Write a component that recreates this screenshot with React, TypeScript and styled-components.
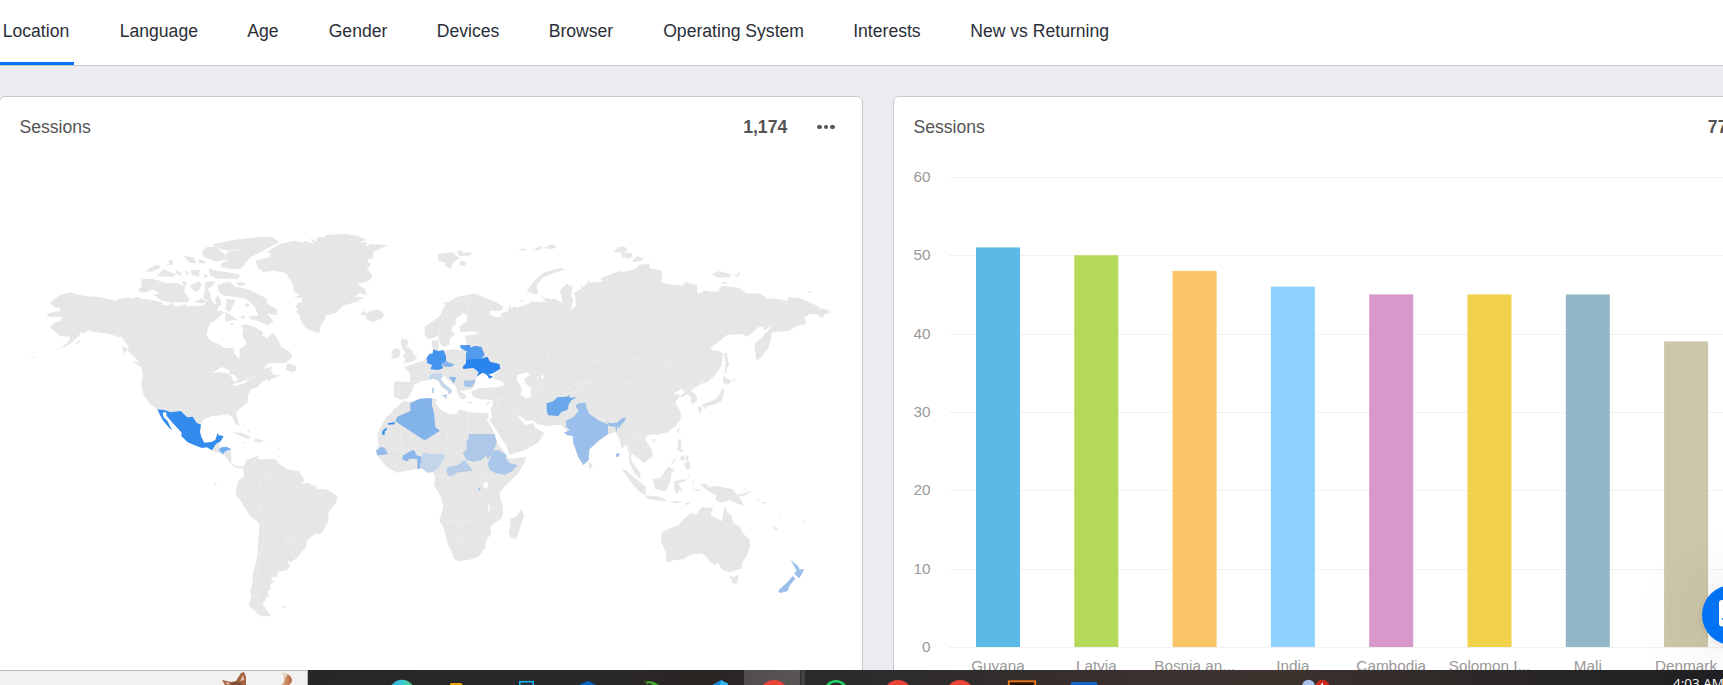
import React from 'react';
import styled, { createGlobalStyle } from 'styled-components';

const GlobalStyle = createGlobalStyle`
  * { box-sizing: border-box; }
  body { margin: 0; overflow: hidden; background: #ebecf0; font-family: "Liberation Sans", Arial, sans-serif; }
`;

const Page = styled.div`
  display: flex;
  flex-direction: column;
  width: 1723px;
  height: 685px;
  overflow: hidden;
  position: relative;
  background: #ebecf0;
`;

const TabBar = styled.nav`
  display: flex;
  flex: none;
  height: 66px;
  padding-left: 2.7px;
  background: #fff;
  border-bottom: 1px solid #c3c8cd;
`;

const Tab = styled.a<{ $width: number }>`
  flex: none;
  width: ${p => p.$width}px;
  line-height: 62px;
  font-size: 17.6px;
  white-space: nowrap;
  color: #2b2e38;
`;

const ActiveMark = styled.span`
  display: block;
  width: 76px;
  height: 3px;
  margin-left: -4.7px;
  background: #0073f5;
`;

const Board = styled.main`
  display: flex;
  flex: 1;
  min-height: 0;
  gap: 30px;
  margin: 30px 0 0 -1px;
`;

const Card = styled.section<{ $width: number }>`
  flex: none;
  display: flex;
  flex-direction: column;
  width: ${p => p.$width}px;
  height: 640px;
  background: #fff;
  border: 1px solid #c5cad0;
  border-radius: 6px;
`;

const CardHeader = styled.header`
  display: flex;
  align-items: center;
  flex: none;
  height: 43px;
  padding: 17px 27px 0 19.5px;
  font-size: 17.6px;
  color: #545454;
`;

const CardTitle = styled.span`
  flex: 1;
`;

const Total = styled.strong`
  margin-right: 30px;
`;

const MoreButton = styled.button`
  display: flex;
  gap: 2px;
  padding: 0;
  border: 0;
  background: none;
`;

const Dot = styled.i`
  width: 4.6px;
  height: 4.6px;
  border-radius: 50%;
  background: #545454;
`;

const Drawing = styled.svg`
  display: block;
  flex: none;
`;

const AxisLabel = styled.text`
  font-size: 15.3px;
  fill: #999;
`;

const ChatLauncher = styled.button`
  position: absolute;
  left: 1702px;
  top: 585px;
  display: flex;
  align-items: flex-start;
  width: 60px;
  height: 60px;
  padding: 15px 0 0 17px;
  border: 0;
  border-radius: 50%;
  background: #0073f5;
  box-shadow: 0 2px 10px rgba(0, 0, 0, 0.08), 0 0 80px rgba(0, 0, 0, 0.14);
`;

const Taskbar = styled.footer`
  position: relative;
  display: flex;
  flex: none;
  height: 15px;
  overflow: hidden;
  background: linear-gradient(90deg, #292423 0, #282626 308px, #29292c 560px, #2b2523 700px, #2a2a2d 830px, #3a302d 1130px, #3c322e 1290px, #2b2727 1500px, #1f2023 1723px);
`;

const SearchBox = styled.div`
  flex: none;
  width: 308px;
  background: #f1f1f1;
  border-top: 1px solid #b9b9b9;
  border-right: 1px solid #b9b9b9;
`;

const Slots = styled.div`
  display: flex;
  flex: 1;
  margin-left: 63px;
`;

const Slot = styled.div<{ $active?: boolean }>`
  flex: none;
  width: 62px;
  height: 15px;
  background: ${p => (p.$active ? 'linear-gradient(90deg, transparent 1px, #514d4c 1px, #595655 57px, #2b2b2c 57px, #424142 59px)' : 'none')};
`;

const Tray = styled.div`
  display: flex;
  flex: none;
  width: 423px;
`;

const Clock = styled.span`
  margin: 4px 0 0 -50px;
  font: 13.5px/18px "Open Sans", sans-serif;
  white-space: nowrap;
  color: #fff;
`;

const tabs: [string, number][] = [
  ['Location', 117], ['Language', 127.5], ['Age', 81.5], ['Gender', 108], ['Devices', 112],
  ['Browser', 114.5], ['Operating System', 190], ['Interests', 117], ['New vs Returning', 150],
];

type Country = [fill: string, d: string];

/* Outlines are grouped by continent; each group has its own drawing origin at a third of scale. */
const americaLand = `
M148,250 L180,225 L212,217 L238,225 L265,229 L300,231 L345,242 L360,236 L388,232 L395,236 L413,230 L424,236 L462,241 L490,248 L487,254 L502,257 L515,250 L530,260 L553,253 L562,259 L607,257 L615,252 L622,243 L610,232 L612,214 L622,207 L632,222 L632,235 L640,250 L648,254 L646,234 L656,226 L662,240 L664,255 L655,262 L650,275 L662,272 L672,277 L655,295 L632,310 L624,325 L620,348 L632,362 L656,372 L672,384 L700,384 L702,400 L718,418 L719,388 L736,375 L738,365 L726,345 L730,330 L724,318 L738,313 L765,322 L790,336 L786,345 L800,355 L820,339 L838,365 L842,380 L872,397 L876,412 L858,428 L806,430 L790,446 L802,443 L818,440 L812,452 L822,464 L845,465 L812,478 L806,486 L803,478 L790,484 L778,494 L776,500 L752,508 L743,530 L744,546 L712,572 L708,582 L715,604 L716,618 L706,612 L697,590 L682,583 L665,584 L650,588 L636,587 L610,600 L603,614 L590,608 L578,590 L562,592 L542,573 L512,577 L496,571 L472,568 L450,552 L432,525 L425,508 L424,490 L428,465 L425,444 L408,432 L398,423 L418,428 L384,392 L385,378 L366,350 L355,352 L330,342 L304,338 L278,335 L270,330 L248,342 L245,333 L236,348 L215,368 L195,380 L160,392 L185,382 L205,366 L210,350 L180,348 L150,322 L162,308 L184,302 L184,290 L150,291 L138,283 L165,275 L181,274 L180,265 L165,262Z
M640,72 L700,60 L780,50 L816,52 L838,66 L790,92 L752,112 L722,146 L700,148 L664,142 L662,132 L684,120 L676,103 L686,95 L735,88 L690,92 L662,88 L645,80Z
M622,80 L645,80 L672,100 L682,118 L650,125 L610,110 L606,96Z
M550,108 L580,112 L590,130 L570,128Z M596,116 L616,124 L616,130 L598,130Z
M436,154 L460,138 L478,134 L480,144 L455,156Z M502,122 L520,119 L518,135 L498,135 L510,129Z
M470,168 L490,148 L502,152 L518,160 L528,160 L520,170 L498,170Z M526,148 L545,160 L543,168 L530,162Z M555,150 L567,158 L560,164Z
M572,150 L600,150 L596,170 L575,165Z M626,145 L650,152 L700,160 L720,164 L715,176 L650,176 L630,165Z M608,160 L625,168 L616,175Z
M425,178 L450,176 L484,182 L462,200 L450,212 L430,218 L414,212 L424,200Z
M455,206 L485,184 L500,190 L535,190 L555,200 L553,216 L570,240 L560,248 L530,246 L510,248 L482,240 L460,224 L480,220Z M546,186 L556,184 L562,196 L552,198Z
M570,196 L598,184 L606,196 L590,217 L575,206Z M615,186 L648,184 L640,195 L622,210 L614,206Z M582,246 L605,234 L622,246 L606,250Z
M652,196 L672,188 L690,186 L706,200 L740,206 L780,226 L802,236 L800,250 L832,270 L830,284 L815,284 L800,278 L820,304 L808,312 L805,318 L775,302 L752,298 L745,290 L775,286 L765,262 L750,246 L735,235 L700,230 L668,226 L655,212Z
M706,186 L732,188 L738,196 L716,198Z M680,236 L706,240 L700,255 L690,275 L676,270Z M676,276 L700,290 L712,300 L690,302 L676,306Z M718,292 L735,286 L732,298Z M738,250 L748,252 L745,262 L736,260Z M688,312 L702,308 L698,318Z
M366,376 L384,386 L372,402Z M226,368 L242,358 L238,368 L228,372Z M88,411 L108,412 L98,414Z M398,421 L418,430 L432,444 L424,443Z
M862,430 L888,438 L888,452 L876,456 L856,450Z
M636,692 L648,672 L660,668 L658,680 L664,684 L655,692 L668,702 L692,688 L694,712 L693,728 L710,738 L733,740 L730,746 L706,742 L690,730 L676,708 L660,700Z
M697,637 L725,638 L752,652 L745,657 L728,650Z M762,655 L793,662 L785,667 L764,667Z M727,667 L740,668 L733,671Z M808,669 L819,671 L812,672Z M742,626 L750,634 L746,638Z M727,612 L735,614 L730,617Z M834,680 L840,686 L838,690Z M836,706 L840,710 L836,714Z`;

const lakes = 'M638,458 L665,441 L688,450 L690,461 L660,457Z M690,462 L702,465 L716,478 L704,486 L697,478Z M697,493 L722,485 L752,476 L735,489 L703,499Z';

const americaBorders = 'M428,439 L618,439 L640,446 M735,475 L770,471 L785,455 L797,453 M345,342 L355,342 L385,378';

const americaCountries: Country[] = [
  ['#338bee', 'M472,568 L496,571 L512,577 L542,573 L562,592 L578,590 L590,608 L603,614 L600,635 L604,650 L613,668 L634,666 L646,660 L653,638 L656,646 L671,648 L662,664 L648,672 L642,682 L636,691 L620,682 L606,684 L580,674 L562,666 L544,648 L545,638 L512,602 L500,588 L498,576 L488,578 L490,590 L503,604 L516,631 L508,624 L490,603 L480,585Z'],
  ['#73adec', 'M656,690 L664,682 L680,680 L694,688 L680,692 L668,702Z'],
];

const greenland = `
M46,122 L90,110 L92,98 L80,96 L118,73 L162,62 L192,68 L196,62 L222,72 L210,55 L230,66 L230,50 L254,52 L256,45 L310,41 L352,47 L380,60 L356,67 L382,68 L378,82 L390,72 L444,75 L400,96 L398,116 L382,118 L384,128 L394,130 L380,152 L390,154 L397,172 L384,184 L350,192 L376,208 L380,226 L360,220 L342,230 L372,232 L350,246 L310,256 L288,278 L255,287 L254,300 L242,315 L238,339 L222,336 L198,324 L180,298 L178,284 L168,276 L178,264 L166,264 L174,248 L186,246 L186,234 L160,230 L180,226 L160,215 L160,195 L138,160 L105,152 L70,156 L54,144Z
M360,282 L372,272 L384,284 L382,276 L402,270 L420,271 L433,284 L424,296 L400,305 L382,300 L378,288Z`;

const eurasiaLand = `
M163,292 L190,272 L210,258 L222,228 L240,212 L262,200 L298,194 L312,190 L336,200 L370,212 L398,228 L400,236 L390,243 L358,242 L362,256 L376,262 L394,260 L392,250 L412,246 L420,222 L424,236 L436,226 L436,234 L480,220 L482,216 L530,215 L515,200 L540,208 L555,206 L578,220 L570,180 L590,162 L608,170 L604,196 L610,210 L602,240 L618,228 L616,200 L612,188 L634,176 L632,158 L638,172 L652,160 L655,148 L660,158 L700,154 L690,145 L750,122 L754,127 L795,118 L808,104 L832,102 L836,98 L840,115 L876,122 L874,158 L910,164 L938,167 L950,155 L960,162 L980,164 L983,190 L995,188 L1002,180 L1010,184 L1048,185 L1048,174 L1060,168 L1105,173 L1130,190 L1173,191 L1190,207 L1210,205 L1253,212 L1253,201 L1286,204 L1315,215 L1342,228 L1354,237 L1370,237 L1383,248 L1365,252 L1357,264 L1340,252 L1320,252 L1302,262 L1310,281 L1285,287 L1255,303 L1210,307 L1202,312 L1203,328 L1195,355 L1175,380 L1160,392 L1153,350 L1158,338 L1180,318 L1210,282 L1182,302 L1180,290 L1164,292 L1140,315 L1125,320 L1118,312 L1070,316 L1045,335 L1020,356 L1035,362 L1050,364 L1060,372 L1054,408 L1035,436 L1010,458 L998,460 L980,468 L962,484 L975,490 L981,500 L980,515 L965,524 L962,500 L950,492 L942,500 L930,502 L936,492 L945,488 L936,476 L915,488 L913,495 L928,492 L928,502 L915,516 L932,545 L932,568 L915,590 L892,607 L860,615 L840,613 L825,625 L832,638 L846,660 L847,680 L820,700 L808,687 L785,670 L783,690 L795,708 L810,728 L812,748 L795,732 L778,698 L778,672 L770,645 L755,655 L750,632 L738,606 L715,612 L658,658 L640,690 L608,618 L588,600 L575,585 L560,585 L535,588 L505,583 L490,572 L470,572 L446,555 L448,565 L465,585 L490,580 L497,594 L523,610 L505,638 L465,660 L418,675 L410,650 L385,610 L358,570 L366,560 L362,540 L368,522 L370,510 L330,508 L310,500 L304,488 L306,482 L330,474 L380,472 L404,466 L398,455 L372,446 L372,436 L391,418 L370,426 L340,430 L320,440 L316,455 L314,468 L304,478 L290,480 L270,484 L288,498 L286,506 L275,508 L262,490 L258,470 L240,455 L218,434 L176,436 L178,450 L155,454 L132,464 L126,486 L112,505 L92,510 L72,500 L72,458 L80,454 L120,456 L120,430 L102,412 L130,402 L160,392 L172,378 L188,372 L190,355 L184,346 L186,332 L202,330 L208,345 L203,358 L225,362 L250,358 L275,362 L270,346 L290,345 L285,322 L290,316 L315,314 L328,307 L300,304 L272,307 L268,290 L290,275 L292,255 L280,250 L258,265 L256,285 L245,290 L246,305 L256,312 L240,325 L238,345 L218,350 L208,335 L204,318 L178,328 L165,318Z
M204,72 L250,67 L262,80 L270,84 L252,96 L242,118 L222,103 L230,98 L204,92Z M262,64 L272,60 L280,68 L308,67 L298,77 L268,78Z M268,96 L280,92 L291,100 L282,108 L270,106Z
M444,60 L460,55 L468,58 L460,62Z M486,57 L494,56 L494,63Z M498,54 L516,46 L512,58 L500,62Z M520,54 L540,44 L552,44 L560,54 L540,57Z
M470,184 L490,156 L520,128 L572,113 L584,119 L550,130 L520,142 L500,165 L505,194 L485,190Z M448,212 L460,208 L456,216Z M218,222 L234,212 L228,222Z
M95,325 L112,330 L116,342 L108,348 L125,360 L132,375 L142,382 L132,394 L98,400 L108,388 L98,380 L106,368 L96,352 L92,340Z M70,358 L86,354 L92,368 L85,384 L62,386 L68,376 L64,368Z
M286,515 L310,517 L300,521Z M345,520 L364,514 L352,524Z M656,694 L668,706 L662,718 L656,714Z`;

const seas = 'M442,436 L470,426 L480,436 L462,446 L466,460 L482,475 L484,500 L468,504 L452,494 L456,475 L440,450Z M500,440 L506,438 L504,446Z M512,440 L524,432 L524,442 L514,446Z';

const eurasiaBorders = `M205,330 L210,290 L225,250 L260,215 L300,200 L318,202 M300,200 L298,225 L290,248 M318,202 L325,240 L338,280 L328,305
M436,412 L448,395 L480,388 L500,390 L535,395 L532,370 L560,362 L590,350 L605,366 L635,360 L660,390 L690,395 L705,410 L688,425 L690,440 L650,455 L640,468 L615,485 L620,495
M705,410 L740,396 L750,400 L780,382 L825,392 L860,408 L895,398 L905,402 L890,415 L915,430 L870,455 L830,466 L790,462 L760,455 L755,440 L725,430Z
M895,398 L925,370 L955,374 L975,402 L1015,418 L1000,445 L985,470 L950,480 M484,475 L530,490 L560,510 M370,510 L420,505 L430,480 L404,466 M430,480 L460,485 M420,505 L440,555 M366,560 L405,540 L420,555 L446,560
M484,475 L500,465 L520,470 L560,480 L590,490 L640,478 M590,475 L620,460 L660,458 M530,558 L545,588 M620,500 L620,522 M660,550 L700,570 L735,575 L765,562 L775,590 L790,605 L815,612 L840,615
M790,605 L770,630 L785,670 M790,620 L815,630 L835,640 L830,665 M160,392 L172,418 L176,436 M120,456 L155,454 M86,458 L86,500 M228,378 L285,372 M218,432 L245,420 L280,420 M245,412 L288,410 M258,442 L280,452 M262,470 L280,470 M288,328 L315,328 M290,340 L330,345
M360,520 L385,500 L378,545 M465,640 L500,620`;

const eurasiaCountries: Country[] = [
  ['#4394ee', 'M190,358 L205,364 L220,360 L228,378 L228,396 L214,402 L220,414 L205,420 L182,418 L186,404 L172,400 L170,384 L178,372 L188,370Z'],
  ['#84b4ea', 'M214,402 L228,393 L254,404 L242,411 L224,410Z'],
  ['#4b98ee', 'M270,346 L300,345 L304,356 L298,368 L286,362 L272,354Z'],
  ['#539ced', 'M304,352 L316,347 L334,350 L344,374 L334,388 L288,388 L288,368 L300,362Z'],
  ['#2a84ee', 'M288,388 L334,386 L352,380 L360,395 L388,402 L391,416 L372,428 L355,434 L370,440 L358,446 L350,434 L338,428 L325,436 L320,440 L326,426 L310,414 L280,417 L278,410 L288,400Z'],
  ['#c5d6e8', 'M176,438 L190,430 L218,430 L218,442 L212,446 L220,458 L246,480 L244,490 L236,494 L234,484 L215,470 L205,452 L190,446 L178,450Z M214,496 L232,492 L230,508Z'],
  ['#bcd0e6', 'M186,474 L192,472 L192,490 L186,488Z'],
  ['#86b5ea', 'M236,440 L258,442 L252,460Z'],
  ['#a4c4ea', 'M281,452 L317,450 L312,462 L304,471 L284,470Z'],
  ['#69a6ea', 'M530,520 L550,514 L562,502 L590,500 L597,496 L600,504 L622,501 L605,510 L597,522 L592,540 L575,545 L565,558 L534,556 L530,540Z'],
  ['#99bfea', 'M620,522 L636,518 L648,520 L650,534 L658,552 L690,574 L713,582 L715,612 L688,630 L658,658 L656,690 L640,705 L625,682 L610,640 L608,618 L592,616 L582,608 L600,600 L588,590 L588,572 L610,562 L626,542 L618,532Z M711,570 L718,580 L740,578 L755,565 L768,562 L765,572 L752,586 L748,594 L742,590 L740,610 L736,590 L716,588Z M738,672 L750,668 L746,680 L738,680Z'],
];

const africaLand = `
M82,50 L100,32 L120,36 L150,26 L185,24 L200,26 L198,40 L210,58 L240,74 L260,70 L268,58 L296,66 L355,70 L356,80 L350,88 L362,108 L375,135 L385,165 L400,180 L412,205 L430,206 L468,200 L465,215 L445,250 L405,288 L388,310 L390,325 L398,345 L399,370 L395,385 L362,408 L364,430 L350,450 L345,475 L325,500 L305,508 L265,514 L250,505 L248,492 L232,460 L222,415 L208,390 L220,350 L212,318 L192,286 L196,262 L190,246 L172,248 L158,236 L142,236 L110,242 L82,248 L50,230 L20,195 L20,175 L26,165 L22,135 L35,105 L50,80 L65,68 L70,58Z
M455,356 L462,378 L445,430 L438,446 L424,446 L415,428 L422,405 L420,388 L440,378Z M16,90 L36,87 L22,91Z`;

const africaLakes = 'M340,280 L355,276 L354,292 L340,294Z M353,342 L358,345 L360,365 L356,365Z';

const africaBorders = `M296,66 L296,132 M186,46 L198,40 M210,122 L232,122 L290,150 M232,122 L234,170 L222,192 M76,94 L90,105 L95,175 L60,180 M22,135 L44,134 M158,148 L150,170 L124,182
M222,392 L300,394 L345,380 M264,394 L262,470 M210,318 L240,318 L245,335 L275,335 L275,355 L320,360 L325,340 L345,335 M324,300 L330,330 L350,345 M360,350 L398,350 M262,450 L290,440 L325,400 L340,420 L340,460
M352,222 L352,260 L325,290 M400,254 L402,290 M308,242 L330,250 L352,245 M190,262 L235,258 L225,290 L205,300 M55,195 L75,215 L82,248 M112,214 L112,242 M308,476 L316,470 L322,476 L314,484Z M445,226 L465,205 M190,246 L222,210 M355,300 L385,318`;

const africaCountries: Country[] = [
  ['#82b3ea', 'M76,94 L82,80 L106,70 L122,62 L120,40 L150,26 L185,24 L186,46 L192,70 L196,112 L210,122 L166,150 L158,148Z'],
  ['#3389f0', 'M54,100 L74,97 L74,103 L54,104Z M36,134 L38,122 L50,112 L50,120 L44,124 L44,134Z'],
  ['#93bcea', 'M18,182 L34,170 L44,174 L54,192 L40,194 L22,196Z'],
  ['#8ab7ea', 'M96,208 L100,196 L124,182 L132,180 L140,196 L155,200 L150,236 L142,236 L142,206 L118,206 L112,214Z'],
  ['#c3d5e8', 'M155,196 L160,188 L180,192 L222,192 L225,200 L205,235 L188,246 L172,248 L158,236 L150,234Z'],
  ['#adc8e8', 'M296,132 L374,132 L380,156 L372,178 L368,192 L352,208 L350,196 L335,210 L310,215 L290,210 L278,188 L290,180 L290,150 L296,148Z'],
  ['#aac8ea', 'M372,182 L385,180 L410,195 L408,206 L420,220 L444,226 L425,244 L405,254 L378,250 L360,240 L352,222Z'],
  ['#b5cde8', 'M228,240 L238,230 L262,226 L284,210 L296,226 L308,242 L275,246 L258,248 L252,256 L234,258Z'],
  ['#9dc2ea', 'M324,296 L333,293 L328,304Z'],
];

const southAmericaLand = `
M131,76 L140,60 L165,50 L172,46 L175,58 L225,58 L238,72 L262,88 L296,94 L313,120 L306,132 L322,128 L350,140 L352,147 L378,148 L400,160 L412,170 L408,188 L386,215 L384,245 L365,280 L345,282 L322,300 L318,320 L290,355 L272,366 L260,360 L270,378 L262,390 L235,395 L230,410 L212,412 L222,426 L210,432 L212,448 L200,456 L208,462 L188,492 L200,510 L214,526 L190,530 L172,522 L170,516 L150,502 L146,488 L155,470 L150,455 L158,430 L158,405 L172,350 L178,250 L150,228 L120,180 L108,165 L108,152 L115,122 L132,110 L130,90Z
M245,497 L262,498 L254,504Z M40,132 L46,126 L52,135Z`;

const southAmericaBorders = `M118,158 L135,140 L155,128 L182,142 L184,158 L160,165 L158,180 L175,196 L190,200 M155,128 L132,118 M182,142 L182,120 L200,116 L192,90 L170,78 L165,55 M200,116 L218,120 L240,100 L245,85 M245,95 L262,112 L310,112 M262,90 L262,112 M288,94 L290,112
M190,200 L212,195 L222,210 L245,225 L262,240 L260,258 L235,258 L230,272 L205,275 L192,270 L186,235 L178,200 M192,275 L188,310 L175,370 L165,440 L172,480 L190,505 L190,520 M230,272 L265,295 L262,310 L278,308 L284,290 L262,260 M282,308 L262,330 L262,358 M265,332 L290,348`;

const siberiaIslands = `
M160,66 L175,52 L190,49 L204,57 L195,68Z M184,70 L215,68 L217,78 L208,86 L186,82Z M214,96 L232,78 L252,88 L240,94Z M456,132 L478,123 L500,130 L514,134 L508,142 L470,142Z M522,134 L534,136 L536,122 L540,134 L532,142Z M484,156 L500,156 L500,162 L488,160Z M742,184 L756,184 L748,189Z
M492,370 L500,370 L508,404 L500,412 L500,428 L493,430 L497,400Z M489,437 L515,454 L502,466 L489,456Z M486,472 L494,485 L484,512 L474,520 L455,526 L440,528 L425,530 L428,522 L450,515 L465,508 L480,492Z M412,532 L424,530 L425,544 L418,552Z M430,530 L444,530 L434,538Z M515,452 L532,443 L522,453Z
M354,596 L360,592 L355,608 L350,604Z M274,628 L288,628 L280,637Z`;

const oceania = `
M354,122 L360,114 L365,124 L362,146 L372,154 L362,158 L352,148Z M360,172 L372,164 L374,180 L364,182Z M376,164 L386,170 L384,184 L378,178Z M374,190 L388,182 L392,202 L384,210 L374,200Z M330,194 L348,172 L342,188Z
M186,208 L200,212 L232,240 L258,262 L256,286 L240,278 L215,250Z M255,286 L300,290 L320,300 L316,305 L262,296Z M278,236 L300,234 L325,200 L344,210 L334,220 L332,240 L322,266 L312,274 L285,266Z
M344,244 L382,236 L375,244 L355,250 L365,268 L368,278 L358,270 L352,282 L342,270Z M328,304 L350,303 L370,306 L345,309Z M370,312 L398,302 L382,314Z M400,234 L402,256 L398,250Z M394,268 L412,267 L430,275 L412,272Z M386,222 L389,230 L386,238Z
M420,253 L440,252 L446,262 L470,258 L518,268 L536,290 L552,316 L530,310 L510,300 L492,306 L474,306 L466,296 L470,286 L442,272 L430,262Z M533,284 L556,280 L577,268 L560,284 L538,290Z M545,262 L558,266 L556,270Z M586,292 L598,300 L594,302Z M604,306 L622,306 L615,312Z M656,346 L661,350 L658,356Z M636,378 L655,387 L646,390Z M727,367 L740,361 L732,369Z
M304,400 L325,386 L355,376 L370,358 L395,338 L408,344 L425,322 L460,324 L452,346 L486,364 L494,318 L504,338 L514,345 L520,370 L540,380 L548,400 L568,418 L570,440 L562,464 L546,490 L544,506 L512,516 L486,510 L474,488 L464,494 L450,486 L440,470 L425,460 L390,464 L370,478 L340,480 L330,487 L317,484 L320,462 L303,425Z
M508,526 L522,531 L536,524 L532,548 L520,552Z`;

const oceaniaCountries: Country[] = [
  ['#99bfea', 'M692,480 L714,498 L718,508 L733,508 L718,535 L712,530 L702,520 L710,512Z M698,528 L706,536 L690,555 L682,574 L660,579 L654,572 L680,548Z'],
];

interface LandProps {
  x: number;
  y: number;
  land: string;
  water?: string;
  borders?: string;
  countries?: Country[];
}

const Land = ({ x, y, land, water, borders, countries = [] }: LandProps) => (
  <g transform={`translate(${x} ${y}) scale(0.33333)`}>
    <path d={land} fill="#e6e6e6" />
    {water && <path d={water} fill="#fff" />}
    {borders && <path d={borders} fill="none" stroke="#f0f0f0" strokeWidth="1.8" />}
    {countries.map(([fill, d]) => <path key={d} d={d} fill={fill} />)}
  </g>
);

const WorldMap = () => (
  <Drawing width="862" height="530" viewBox="0 140 862 530">
    <Land x={0} y={220} land={americaLand} water={lakes} borders={americaBorders} countries={americaCountries} />
    <Land x={240} y={220} land={greenland} />
    <Land x={200} y={440} land={southAmericaLand} borders={southAmericaBorders} />
    <Land x={370} y={390} land={africaLand} water={africaLakes} borders={africaBorders} countries={africaCountries} />
    <Land x={370} y={230} land={eurasiaLand} water={seas} borders={eurasiaBorders} countries={eurasiaCountries} />
    <Land x={560} y={230} land={siberiaIslands} />
    <Land x={560} y={400} land={oceania} borders="M487,262 L489,306 M290,240 L320,236 L330,215" countries={oceaniaCountries} />
  </Drawing>
);

const bars: [label: string, value: number, color: string][] = [
  ['Guyana', 51, '#5cb9e6'],
  ['Latvia', 50, '#b5d959'],
  ['Bosnia an...', 48, '#fbc466'],
  ['India', 46, '#8ed3ff'],
  ['Cambodia', 45, '#d898cb'],
  ['Solomon I...', 45, '#f1d24a'],
  ['Mali', 45, '#93b7c7'],
  ['Denmark', 39, '#cdc6a8'],
];

const BASE = 647;
const UNIT = 7.835;

const BarChart = () => (
  <Drawing width="830" height="535" viewBox="894 140 830 535">
    {[0, 10, 20, 30, 40, 50, 60].map(v => {
      const y = Math.round(BASE - v * UNIT);
      return (
        <g key={v}>
          <rect x="949" y={y} width="780" height="1" fill="#f1f1f1" />
          <AxisLabel x="930.5" y={y + 5} textAnchor="end">{v}</AxisLabel>
        </g>
      );
    })}
    {bars.map(([label, value, color], i) => {
      const cx = 998 + i * 98.3;
      const h = value * UNIT;
      return (
        <g key={label}>
          <rect x={cx - 22} y={BASE - h} width="44" height={h} fill={color} />
          <AxisLabel x={cx} y="671" textAnchor="middle">{label}</AxisLabel>
        </g>
      );
    })}
  </Drawing>
);

const taskIcons: React.ReactNode[] = [
  <circle cx="31" cy="23" r="13.2" fill="url(#edge)" />,
  <path d="M17,15 V14 L18,13 H28 L30,15Z" fill="#e8a500" />,
  <rect x="24.8" y="11.7" width="13.4" height="12" fill="#23313a" stroke="#1bb4ee" strokeWidth="1.6" />,
  <path d="M22,15 L31,10.8 L39,15Z" fill="#0b62bb" />,
  <path d="M24,12 L30,11 L35,12 L40,15 H34 L30,13 L27,15 L28,12.6Z" fill="#45a62c" />,
  <><path d="M31,15 L40,10 V15Z" fill="#1489d8" /><path d="M40,10 L47,13.5 V15 H39Z" fill="#36b5f4" /></>,
  <circle cx="31" cy="24" r="14" fill="#e94335" />,
  <circle cx="31" cy="22.5" r="11.2" fill="none" stroke="#25d366" strokeWidth="2.6" />,
  <circle cx="31" cy="24" r="14" fill="#e94335" />,
  <circle cx="31" cy="24" r="14" fill="#e94335" />,
  <rect x="17.8" y="11.3" width="26.4" height="14" fill="#281507" stroke="#ee7b18" strokeWidth="1.8" />,
  <rect x="18" y="12" width="26" height="8" rx="1" fill="#1565c8" />,
];

const App = () => (
  <>
    <GlobalStyle />
    <Page>
      <TabBar>
        {tabs.map(([name, width], i) => (
          <Tab key={name} $width={width}>
            {name}
            {i === 0 && <ActiveMark />}
          </Tab>
        ))}
      </TabBar>
      <Board>
        <Card $width={864}>
          <CardHeader>
            <CardTitle>Sessions</CardTitle>
            <Total>1,174</Total>
            <MoreButton><Dot /><Dot /><Dot /></MoreButton>
          </CardHeader>
          <WorldMap />
        </Card>
        <Card $width={920}>
          <CardHeader>
            <CardTitle>Sessions</CardTitle>
            <Total>771</Total>
            <MoreButton><Dot /><Dot /><Dot /></MoreButton>
          </CardHeader>
          <BarChart />
        </Card>
      </Board>
      <ChatLauncher>
        <Drawing width="28" height="28" viewBox="0 0 28 28">
          <path d="M3,0 H25 V27 L20,26.5 H3 Q0,26.5 0,23.5 V3 Q0,0 3,0Z" fill="#fff" />
          <path d="M3,18.5 Q12,26 23,18.5" fill="none" stroke="#0073f5" strokeWidth="1.5" />
        </Drawing>
      </ChatLauncher>
      <Taskbar>
        <SearchBox>
          <Drawing width="307" height="14" viewBox="0 671 307 14">
            <defs>
              <linearGradient id="fur" x1="0" x2="1">
                <stop offset="0" stopColor="#e5b48d" />
                <stop offset="1" stopColor="#ad6037" />
              </linearGradient>
              <linearGradient id="edge">
                <stop offset="0" stopColor="#2ba8df" />
                <stop offset=".5" stopColor="#38c8d5" />
                <stop offset="1" stopColor="#5bd36c" />
              </linearGradient>
            </defs>
            <path d="M222,680 L231,682 L236,681 L241,673 L244,672 L246,677 L246,685 L225,685Z" fill="#a0623f" />
            <path d="M225,682 L230,683 L228,685Z M243,675 L244.5,680 L240,681Z" fill="#e5bdb6" />
            <path d="M231,684 Q236,680 242,684 V685 H231Z" fill="#7d4a34" />
            <path d="M281,673 Q291,673 292,680 Q292,683 289,685 H281 Q286,681 284,677 Q283,674 281,673Z" fill="url(#fur)" />
            <path d="M281,673 L287,674 L286,678 L284,676Z" fill="#e9ddd4" />
          </Drawing>
        </SearchBox>
        <Slots>
          {taskIcons.map((icon, i) => (
            <Slot key={i} $active={i === 6}>
              <Drawing width="62" height="15" viewBox="0 0 62 15">{icon}</Drawing>
            </Slot>
          ))}
        </Slots>
        <Tray>
          <Drawing width="423" height="15" viewBox="1300 0 423 15">
            <circle cx="1308.5" cy="16" r="6.3" fill="#a9c3ef" />
            <circle cx="1322.5" cy="17" r="7.2" fill="#cc2a1d" />
            <path d="M1320.5,15 L1323,12.5 V15Z" fill="#fff" />
          </Drawing>
          <Clock>4:03 AM</Clock>
        </Tray>
      </Taskbar>
    </Page>
  </>
);

export default App;
